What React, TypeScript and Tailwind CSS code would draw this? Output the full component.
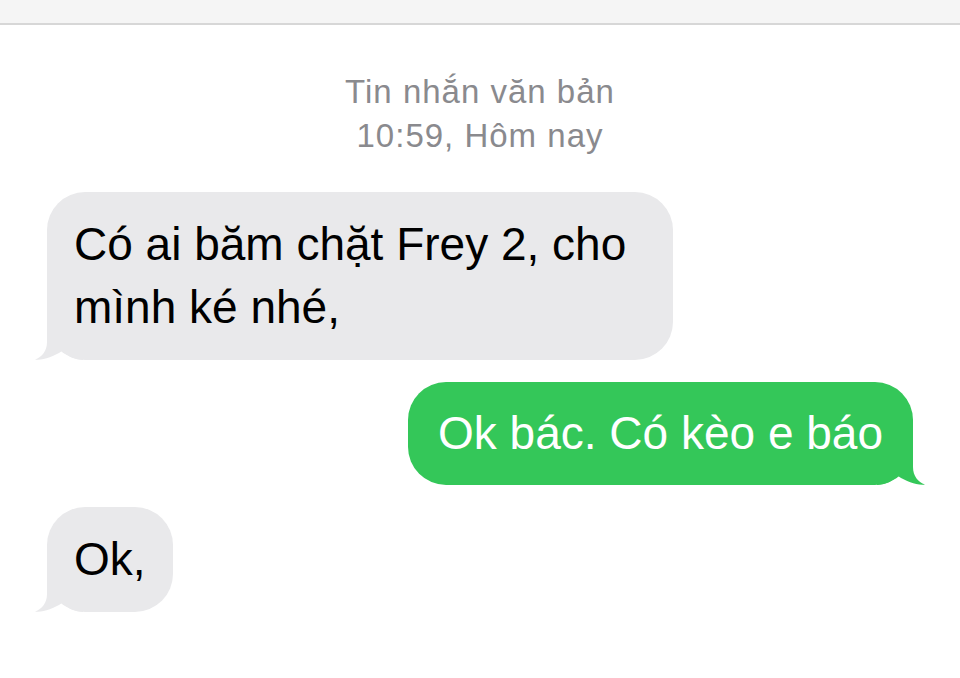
const font = { fontFamily: '"Liberation Sans", Arial, sans-serif' };

function Tail({ side, color }: { side: "left" | "right"; color: string }) {
  const pos = side === "left" ? "-left-[12px] -scale-x-100" : "-right-[12px]";
  return (
    <svg
      className={`absolute bottom-0 ${pos}`}
      width="48"
      height="44"
      viewBox="0 0 48 44"
      fill={color}
    >
      <path d="M0 0 H36 V26 C36 35 41 41 48 43.5 C40 44.5 30 41 21 35 C15 40 8 44 0 44 Z" />
    </svg>
  );
}

function Received({ text }: { text: string }) {
  return (
    <div className="flex">
      <div className="relative max-w-[626px] rounded-[38px] bg-[#e9e9eb] px-[27px] py-[21px] text-[46px] leading-[63px] text-black">
        <Tail side="left" color="#e9e9eb" />
        <span className="relative">{text}</span>
      </div>
    </div>
  );
}

function Sent({ text }: { text: string }) {
  return (
    <div className="flex justify-end">
      <div className="relative max-w-[626px] rounded-[38px] bg-[#34c759] px-[30px] py-[20px] text-[46px] leading-[63px] text-white">
        <Tail side="right" color="#34c759" />
        <span className="relative">{text}</span>
      </div>
    </div>
  );
}

export default function App() {
  return (
    <div className="h-[678px] w-[960px] overflow-hidden bg-white" style={font}>
      <div className="h-[25px] border-b-2 border-[#d7d7d7] bg-[#f5f5f5]" />
      <div className="pt-[45px] text-center text-[33px] leading-[44px] tracking-[1px] text-[#8a8a8e]">
        <div>Tin nhắn văn bản</div>
        <div>10:59, Hôm nay</div>
      </div>
      <div className="mt-[34px] flex flex-col gap-[22px] px-[47px]">
        <Received text="Có ai băm chặt Frey 2, cho mình ké nhé," />
        <Sent text="Ok bác. Có kèo e báo" />
        <Received text="Ok," />
      </div>
    </div>
  );
}
